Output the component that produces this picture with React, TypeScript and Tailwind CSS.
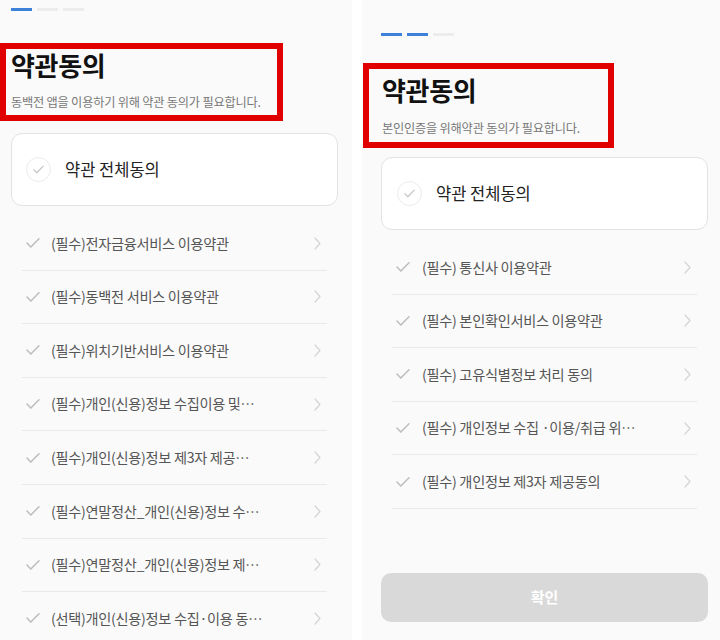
import React from "react";

const FONT = { fontFamily: '"Noto Sans CJK KR", "Noto Sans", sans-serif' };

function Tick({ className = "" }: { className?: string }) {
  return (
    <svg viewBox="0 0 14 11" className={className} fill="none">
      <path d="M1 5.6L4.8 9.6L13 1.2" stroke="currentColor" strokeWidth="1.5" strokeLinecap="round" strokeLinejoin="round" />
    </svg>
  );
}

function Chevron() {
  return (
    <svg viewBox="0 0 7 13" className="h-[13px] w-[7px] text-[#d4d4d4]" fill="none">
      <path d="M1 1L6 6.5L1 12" stroke="currentColor" strokeWidth="1.2" strokeLinecap="round" strokeLinejoin="round" />
    </svg>
  );
}

function Progress({ done }: { done: number }) {
  return (
    <div className="flex gap-[5px]">
      {[0, 1, 2].map((i) => (
        <div key={i} className={`h-[3px] w-[21px] ${i < done ? "bg-[#3b82d8]" : "bg-[#ececec]"}`} />
      ))}
    </div>
  );
}

function AllAgree({ pl }: { pl: string }) {
  return (
    <div className={`flex h-[73px] items-center gap-[14px] rounded-[11px] border border-[#e3e3e3] bg-white ${pl}`}>
      <div className="flex h-[25px] w-[25px] items-center justify-center rounded-full border-[1.5px] border-[#ebebeb]">
        <Tick className="h-[9px] w-[11px] text-[#c4c4c4]" />
      </div>
      <span className="text-[16.5px] text-[#222]">약관 전체동의</span>
    </div>
  );
}

function TermRow({ label, gap }: { label: string; gap: string }) {
  return (
    <div className={`flex h-[53.6px] items-center border-b border-[#e9e9e9] pl-[4px] pr-[6px] ${gap}`}>
      <Tick className="h-[12px] w-[14px] text-[#bdbdbd]" />
      <span className="flex-1 text-[14.2px] tracking-[-0.3px] text-[#555]">{label}</span>
      <Chevron />
    </div>
  );
}

const LEFT_TERMS = [
  "(필수)전자금융서비스 이용약관",
  "(필수)동백전 서비스 이용약관",
  "(필수)위치기반서비스 이용약관",
  "(필수)개인(신용)정보 수집이용 및…",
  "(필수)개인(신용)정보 제3자 제공…",
  "(필수)연말정산_개인(신용)정보 수…",
  "(필수)연말정산_개인(신용)정보 제…",
  "(선택)개인(신용)정보 수집·이용 동…",
];

const RIGHT_TERMS = [
  "(필수) 통신사 이용약관",
  "(필수) 본인확인서비스 이용약관",
  "(필수) 고유식별정보 처리 동의",
  "(필수) 개인정보 수집 ·이용/취급 위…",
  "(필수) 개인정보 제3자 제공동의",
];

export default function App() {
  return (
    <div className="flex h-[640px] w-[720px] overflow-hidden bg-white" style={FONT}>
      {/* left screen */}
      <div className="flex w-[352px] flex-col bg-[#fafafa] pl-[11px] pr-[14px] pt-[8px]">
        <Progress done={1} />
        <div className="-ml-[11px] mt-[32px] flex w-[283px] flex-col border-[6px] border-[#e00000] pl-[5px] pb-[5px]">
          <h1 className="text-[26px] font-bold leading-8 tracking-[-0.3px] text-[#111]">약관동의</h1>
          <p className="mt-[13px] text-[12.2px] leading-4 tracking-[-0.2px] text-[#777]">
            동백전 앱을 이용하기 위해 약관 동의가 필요합니다.
          </p>
        </div>
        <div className="mt-[12px]">
          <AllAgree pl="pl-[14px]" />
        </div>
        <div className="mt-[11px] flex flex-col px-[11px]">
          {LEFT_TERMS.map((t) => (
            <TermRow key={t} label={t} gap="gap-[11px]" />
          ))}
        </div>
      </div>

      <div className="w-[10px] bg-white" />

      {/* right screen */}
      <div className="flex flex-1 flex-col bg-[#fafafa] pl-[19px] pr-[12px] pt-[33px]">
        <Progress done={2} />
        <div className="-ml-[18px] mt-[27px] flex w-[251px] flex-col border-[6px] border-[#e00000] pl-[13px] pt-[5px] pb-[6px]">
          <h1 className="text-[26px] font-bold leading-8 tracking-[-0.3px] text-[#111]">약관동의</h1>
          <p className="mt-[14px] text-[12.2px] leading-4 tracking-[-0.2px] text-[#777]">
            본인인증을 위해약관 동의가 필요합니다.
          </p>
        </div>
        <div className="mt-[9px]">
          <AllAgree pl="pl-[15px]" />
        </div>
        <div className="mt-[11px] flex flex-col px-[11px]">
          {RIGHT_TERMS.map((t) => (
            <TermRow key={t} label={t} gap="gap-[12px]" />
          ))}
        </div>
        <div className="flex-1" />
        <button className="mb-[18px] h-[49px] w-full rounded-[10px] bg-[#d9d9d9] text-[15px] font-bold text-white">
          확인
        </button>
      </div>
    </div>
  );
}
